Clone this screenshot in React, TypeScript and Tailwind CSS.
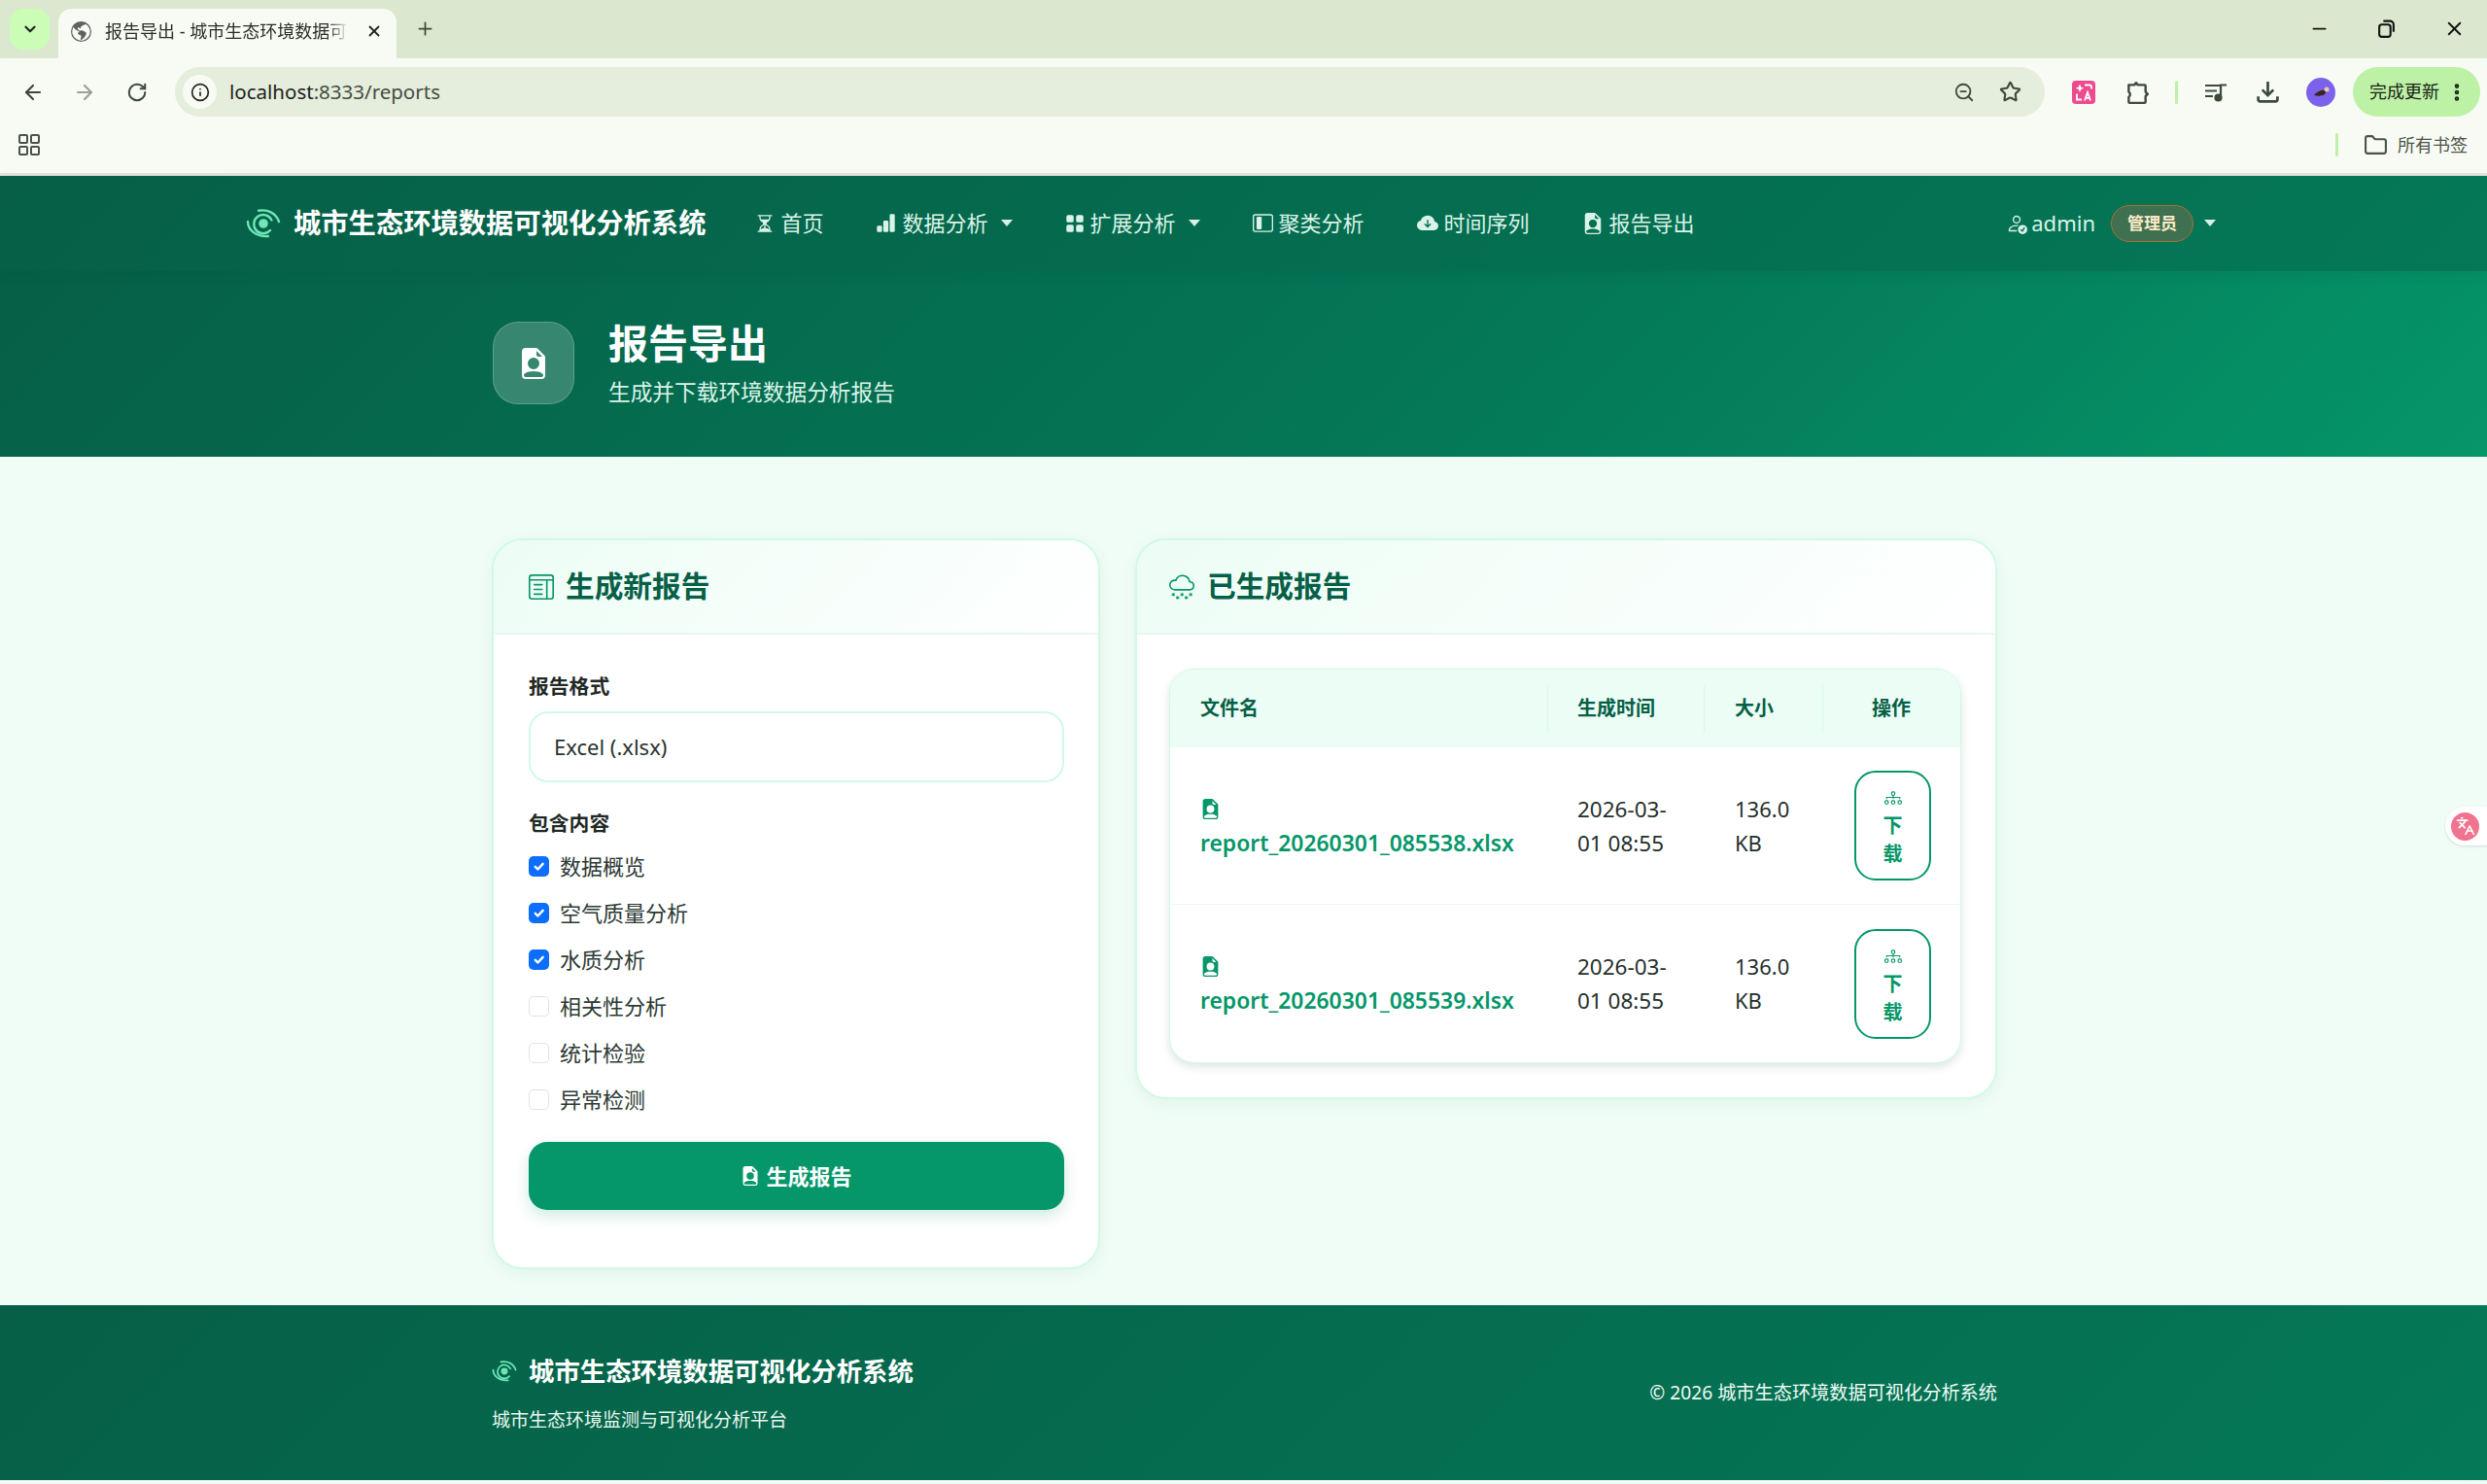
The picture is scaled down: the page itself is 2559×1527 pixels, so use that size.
import React from "react";
import { ArrowLeft, ArrowRight, RotateCw, Info, ZoomOut, Star, MoreVertical, Folder, Plus, X, ChevronDown, Minus, Languages } from "lucide-react";
import { BsHourglassSplit, BsBarChartFill, BsGridFill, BsLayoutSidebarInset, BsCloudArrowDownFill, BsFileEarmarkPersonFill, BsPersonCheck, BsLayoutTextWindow, BsCloudSnow, BsDiagram3, BsGlobeAmericas } from "react-icons/bs";

function Swirl({ width, height }: { width: number; height: number }) {
  return (
    <svg width={width} height={height} viewBox="0 0 36 30" fill="none" stroke="#6ee7b7" className="shrink-0">
      <circle cx="18" cy="15" r="4.8" fill="#6ee7b7" stroke="none" />
      <path d="M26.5 11.5 A9.6 9.6 0 1 0 25 22" strokeWidth="2.4" strokeLinecap="round" />
      <path d="M13 1.8 C22 0 31 4 34 13" strokeWidth="2.4" strokeLinecap="round" />
      <path d="M2 13 C2 21 10 29 23 28" strokeWidth="2.4" strokeLinecap="round" />
    </svg>
  );
}

function Caret() {
  return <span className="ml-[13px] inline-block w-0 h-0 border-x-[6px] border-x-transparent border-t-[7px] border-t-[#d8f0e6]" />;
}

function NavItem({ icon, label, caret }: { icon: React.ReactNode; label: string; caret?: boolean }) {
  return (
    <div className="flex items-center text-[22px] text-[#d9f3e8] px-[27px]">
      <span className="mr-[6px] flex items-center">{icon}</span>
      <span>{label}</span>
      {caret && <Caret />}
    </div>
  );
}

function Check({ label, on }: { label: string; on?: boolean }) {
  return (
    <div className="flex items-center h-[48px] text-[22px] text-[#2d3a35]">
      <span className={on ? "w-[21px] h-[21px] rounded-[5px] bg-[#0d6efd] flex items-center justify-center mr-[11px]" : "w-[21px] h-[21px] rounded-[5px] bg-white border border-[#dfe5e2] mr-[11px]"}>
        {on && (
          <svg width="15" height="15" viewBox="0 0 20 20" fill="none" stroke="#fff" strokeWidth="3.2" strokeLinecap="round" strokeLinejoin="round">
            <path d="M5 10.5l3.5 3.5 7-7.5" />
          </svg>
        )}
      </span>
      {label}
    </div>
  );
}

function Row({ file, last }: { file: string; last?: boolean }) {
  return (
    <div className={last ? "grid grid-cols-[389px_161px_122px_143px] h-[162px] items-center" : "grid grid-cols-[389px_161px_122px_143px] h-[162px] items-center border-b border-[#ecfdf5]"}>
      <div className="pl-[31px] text-[22.9px] leading-[35px] font-semibold text-[#059669]">
        <BsFileEarmarkPersonFill size={21} className="block h-[35px]" />
        <div className="whitespace-nowrap">{file}</div>
      </div>
      <div className="pl-[30px] pr-[20px] text-[22.5px] leading-[35px] text-[#25302c] whitespace-nowrap">2026-03-<br />01 08:55</div>
      <div className="pl-[31px] text-[22px] leading-[35px] text-[#25302c]">136.0<br />KB</div>
      <div className="pl-[32px]">
        <div className="w-[79px] h-[113px] rounded-[22px] border-2 border-[#059669] pt-[6px] flex flex-col items-center justify-center text-[#059669] text-[20px] font-semibold leading-[29px]">
          <BsDiagram3 size={18} className="mb-[5px]" />
          <span>下</span>
          <span>载</span>
        </div>
      </div>
    </div>
  );
}

export default function App() {
  return (
    <div className="relative min-h-[1527px] flex flex-col bg-[#effdf6] overflow-hidden font-['Noto_Sans','Noto_Sans_CJK_SC',sans-serif]">
      {/* Browser tab strip */}
      <div className="h-[60px] bg-[#dbe8cf] flex items-end pl-[10px] shrink-0">
        <div className="w-[41px] h-[42px] mb-[9px] rounded-[14px] bg-[#ccfdb6] flex items-center justify-center">
          <ChevronDown size={18} strokeWidth={3} className="text-[#1f2a1c]" />
        </div>
        <div className="ml-[9px] w-[348px] h-[51px] rounded-t-[14px] bg-[#f8fbf3] flex items-center pl-[13px] pb-[5px]">
          <BsGlobeAmericas size={21} className="text-[#5d6360]" />
          <span className="ml-[14px] w-[250px] overflow-hidden whitespace-nowrap text-[18px] text-[#2a2e2a] [mask-image:linear-gradient(90deg,#000_92%,transparent)]">报告导出 - 城市生态环境数据可视化分析系统</span>
          <X size={18} strokeWidth={2.4} className="ml-[18px] text-[#1f241e]" />
        </div>
        <Plus size={21} strokeWidth={2} className="ml-[19px] mb-[20px] text-[#3c4a3a]" />
        <div className="ml-auto flex items-center mb-[19px] pr-[22px] gap-[48px] text-[#10140f]">
          <Minus size={21} strokeWidth={2} />
          <svg width="21" height="21" viewBox="0 0 20 20" fill="none" stroke="currentColor" strokeWidth="2">
            <rect x="3" y="6" width="11" height="12" rx="2.5" />
            <path d="M7 2.5h6.5A3.5 3.5 0 0 1 17 6v7" />
          </svg>
          <X size={23} strokeWidth={2} />
        </div>
      </div>
      {/* Toolbar */}
      <div className="h-[60px] bg-[#f8fbf3] flex items-center shrink-0 pl-[22px] pt-[9px] text-[#3d4a3a] rounded-t-[12px]">
        <ArrowLeft size={24} strokeWidth={2.2} />
        <ArrowRight size={24} strokeWidth={2.2} className="ml-[29px] text-[#9aa197]" />
        <RotateCw size={22} strokeWidth={2.2} className="ml-[31px]" />
        <div className="ml-[28px] w-[1924px] h-[51px] rounded-full bg-[#e5eddc] flex items-center pl-[8px] pr-[24px]">
          <span className="w-[35px] h-[35px] rounded-full bg-[#f8fbf3] flex items-center justify-center">
            <Info size={20} strokeWidth={2} className="text-[#1f241e]" />
          </span>
          <span className="ml-[13px] text-[20.5px] text-[#1c211b]">localhost<span className="text-[#444d41]">:8333/reports</span></span>
          <ZoomOut size={22} strokeWidth={2} className="ml-auto" />
          <Star size={23} strokeWidth={2.2} className="ml-[25px]" />
        </div>
        <div className="flex items-center h-[51px]">
          <svg width="24" height="24" viewBox="0 0 24 24" fill="none" stroke="#fff" strokeWidth="1.8" className="ml-[28px]">
            <rect width="24" height="24" rx="4" fill="#ee4b8f" stroke="none" />
            <path d="M8 3.5l1.2 3 3 1.2-3 1.2L8 11.9 6.8 8.9l-3-1.2 3-1.2z" fill="#fff" stroke="none" />
            <path d="M13 4.5h5q2 0 2 2v2" />
            <path d="M5 13.5v6h5M13 20.5l3-8.5 3 8.5M14 17.8h4" />
          </svg>
          <svg width="26" height="26" viewBox="0 0 24 24" fill="none" stroke="currentColor" strokeWidth="2.2" strokeLinejoin="round" className="ml-[30px]">
            <path d="M4 5h5a2.5 2.5 0 0 1 4 0h6a1 1 0 0 1 1 1v5.5a2.2 2.2 0 0 1 0 4V21a1 1 0 0 1-1 1H5a1 1 0 0 1-1-1v-4.5a3 3 0 0 0 0-5z" />
            <circle cx="11" cy="3.5" r="1.6" fill="currentColor" stroke="none" />
            <circle cx="21.5" cy="13.5" r="1.6" fill="currentColor" stroke="none" />
          </svg>
          <span className="ml-[26px] w-[3px] h-[24px] rounded-full bg-[#bdf1a6]" />
          <svg width="24" height="24" viewBox="0 0 24 24" fill="none" stroke="currentColor" strokeWidth="2.2" className="ml-[27px]">
            <path d="M1 5h15M1 10.5h12M1 16h8" />
            <path d="M17 17V4.5h6" />
            <circle cx="14.5" cy="17.5" r="3" fill="currentColor" />
          </svg>
          <svg width="25" height="25" viewBox="0 0 24 24" fill="none" stroke="currentColor" strokeWidth="2.6" className="ml-[29px]">
            <path d="M12 2v13M6.5 10l5.5 5.5 5.5-5.5" />
            <path d="M2.5 16.5v3a2 2 0 0 0 2 2h15a2 2 0 0 0 2-2v-3" />
          </svg>
          <svg width="30" height="30" viewBox="0 0 30 30" className="ml-[27px]">
            <circle cx="15" cy="15" r="15" fill="#7c62ea" />
            <path d="M8 18c3-4 9-6 14-6l-3 5c-3 2-7 2-11 1z" fill="#3a2420" />
            <circle cx="21" cy="12" r="2.5" fill="#e8c7b5" />
          </svg>
          <div className="ml-[18px] w-[131px] h-[51px] rounded-full bg-[#bdf1a6] flex items-center pl-[17px] text-[18px] text-[#1a2417]">
            完成更新
            <MoreVertical size={22} strokeWidth={3} className="ml-[7px]" />
          </div>
        </div>
      </div>
      {/* Bookmarks */}
      <div className="h-[61px] bg-[#f8fbf3] border-b-[3px] border-[#e3e6dd] flex items-center shrink-0 pl-[19px] pr-[20px]">
        <svg width="22" height="22" viewBox="0 0 22 22" fill="none" stroke="#4a524a" strokeWidth="2">
          <rect x="1" y="1" width="8" height="8" rx="1" />
          <rect x="13" y="1" width="8" height="8" rx="1" />
          <rect x="1" y="13" width="8" height="8" rx="1" />
          <rect x="13" y="13" width="8" height="8" rx="1" />
        </svg>
        <span className="ml-auto w-[3px] h-[24px] rounded-full bg-[#bdf1a6]" />
        <Folder size={25} strokeWidth={2} className="ml-[26px] text-[#4a524a]" />
        <span className="ml-[10px] text-[18px] text-[#4c544b]">所有书签</span>
      </div>
      {/* Navbar */}
      <nav className="h-[98px] shrink-0 bg-[linear-gradient(135deg,#065f46,#047857)] flex items-center pl-[253px] pb-[1px] text-white shadow-[0_4px_12px_rgba(6,78,59,0.12)] relative z-10">
        <Swirl width={36} height={30} />
        <span className="ml-[13px] text-[28.3px] font-bold text-white whitespace-nowrap">城市生态环境数据可视化分析系统</span>
        <div className="flex items-center ml-[24px]">
          <NavItem icon={<BsHourglassSplit size={20} />} label="首页" />
          <NavItem icon={<BsBarChartFill size={21} />} label="数据分析" caret />
          <NavItem icon={<BsGridFill size={20} />} label="扩展分析" caret />
          <NavItem icon={<BsLayoutSidebarInset size={21} />} label="聚类分析" />
          <NavItem icon={<BsCloudArrowDownFill size={22} />} label="时间序列" />
          <NavItem icon={<BsFileEarmarkPersonFill size={22} />} label="报告导出" />
        </div>
        <div className="ml-auto mr-[279px] flex items-center text-[#d9f3e8]">
          <BsPersonCheck size={22} className="mr-[4px]" />
          <span className="text-[22px]">admin</span>
          <span className="ml-[16px] -mr-[2px] w-[85px] h-[38px] rounded-full bg-[#3f7150] border border-[#a9702f] flex items-center justify-center text-[17px] font-semibold text-[#fdecc8]">管理员</span>
          <Caret />
        </div>
      </nav>
      {/* Hero */}
      <header className="h-[191px] shrink-0 bg-[linear-gradient(135deg,#065f46,#047857_60%,#059669)] pl-[507px] flex items-start pt-[50px]">
        <div className="mt-[2px] w-[84px] h-[85px] rounded-[26px] bg-white/20 border border-white/20 flex items-center justify-center">
          <BsFileEarmarkPersonFill size={32} className="text-white" />
        </div>
        <div className="ml-[35px]">
          <h1 className="text-[41px] leading-[48px] font-bold text-white">报告导出</h1>
          <p className="mt-[10px] text-[22.7px] leading-[34px] text-[#d9f3e8]">生成并下载环境数据分析报告</p>
        </div>
      </header>
      {/* Main */}
      <main className="flex-1 pl-[506px] pt-[84px] flex items-start gap-[36px]">
        <section className="w-[626px] h-[752px] rounded-[32px] border-2 border-[#d1fae5] bg-white shadow-[0_4px_16px_rgba(6,95,70,0.06)] overflow-hidden shrink-0">
          <div className="h-[97px] border-b-2 border-[#e6f9f0] bg-[linear-gradient(135deg,#ecfdf5,#ffffff)] flex items-center pl-[36px]">
            <BsLayoutTextWindow size={26} className="text-[#059669]" />
            <h3 className="ml-[12px] text-[29.7px] font-bold text-[#065f46]">生成新报告</h3>
          </div>
          <div className="px-[35px] ml-[1px] pt-[37px]">
            <div className="text-[20.8px] leading-[32px] font-bold text-[#1f2926]">报告格式</div>
            <div className="mt-[10px] h-[73px] rounded-[20px] border-2 border-[#d1fae5] flex items-center pl-[24px] text-[22px] text-[#2a3430]">Excel (.xlsx)</div>
            <div className="mt-[26px] text-[20.8px] leading-[32px] font-bold text-[#1f2926]">包含内容</div>
            <div className="mt-[4px]">
              <Check label="数据概览" on />
              <Check label="空气质量分析" on />
              <Check label="水质分析" on />
              <Check label="相关性分析" />
              <Check label="统计检验" />
              <Check label="异常检测" />
            </div>
            <button className="mt-[20px] w-full h-[70px] rounded-[19px] bg-[#059669] text-white text-[22px] font-bold flex items-center justify-center shadow-[0_6px_16px_rgba(5,150,105,0.2)]">
              <BsFileEarmarkPersonFill size={20} className="mr-[6px]" />
              生成报告
            </button>
          </div>
        </section>
        <section className="w-[887px] h-[577px] rounded-[32px] border-2 border-[#d1fae5] bg-white shadow-[0_4px_16px_rgba(6,95,70,0.06)] overflow-hidden shrink-0">
          <div className="h-[97px] border-b-2 border-[#e6f9f0] bg-[linear-gradient(135deg,#ecfdf5,#ffffff)] flex items-center pl-[33px]">
            <BsCloudSnow size={26} className="text-[#059669]" />
            <h3 className="ml-[13px] text-[29.7px] font-bold text-[#065f46]">已生成报告</h3>
          </div>
          <div className="pl-[33px] pt-[35px]">
            <div className="w-[815px] rounded-[26px] border border-[#d1fae5] bg-white shadow-[0_4px_10px_rgba(6,78,59,0.14)] overflow-hidden">
              <div className="grid grid-cols-[389px_161px_122px_143px] h-[80px] items-center bg-[#ecfdf5] text-[20px] font-bold text-[#065f46]">
                <div className="pl-[31px] h-[50px] flex items-center border-r border-[#dcf8ea]">文件名</div>
                <div className="pl-[30px] h-[50px] flex items-center border-r border-[#dcf8ea]">生成时间</div>
                <div className="pl-[31px] h-[50px] flex items-center border-r border-[#dcf8ea]">大小</div>
                <div className="pl-[50px] h-[50px] flex items-center">操作</div>
              </div>
              <Row file="report_20260301_085538.xlsx" />
              <Row file="report_20260301_085539.xlsx" last />
            </div>
          </div>
        </section>
      </main>
      {/* Footer */}
      <footer className="h-[180px] mb-[4px] shrink-0 bg-[linear-gradient(135deg,#065f46,#047857)] flex items-center justify-between pl-[506px] pr-[504px] text-white">
        <div>
          <div className="flex items-center">
            <Swirl width={26} height={22} />
            <span className="ml-[12px] text-[26.4px] font-bold leading-[40px]">城市生态环境数据可视化分析系统</span>
          </div>
          <p className="mt-[16px] text-[19px] leading-[28px] text-[#e6f7ef]">城市生态环境监测与可视化分析平台</p>
        </div>
        <p className="text-[19.2px] text-[#f0fbf6]">© 2026 城市生态环境数据可视化分析系统</p>
      </footer>
      {/* Floating translate widget */}
      <div className="absolute left-[2516px] top-[830px] w-[60px] h-[40px] rounded-full bg-white flex items-center pl-[6px] shadow">
        <span className="w-[29px] h-[29px] rounded-full bg-[#f0738f] flex items-center justify-center">
          <Languages size={20} className="text-white" />
        </span>
      </div>
    </div>
  );
}
